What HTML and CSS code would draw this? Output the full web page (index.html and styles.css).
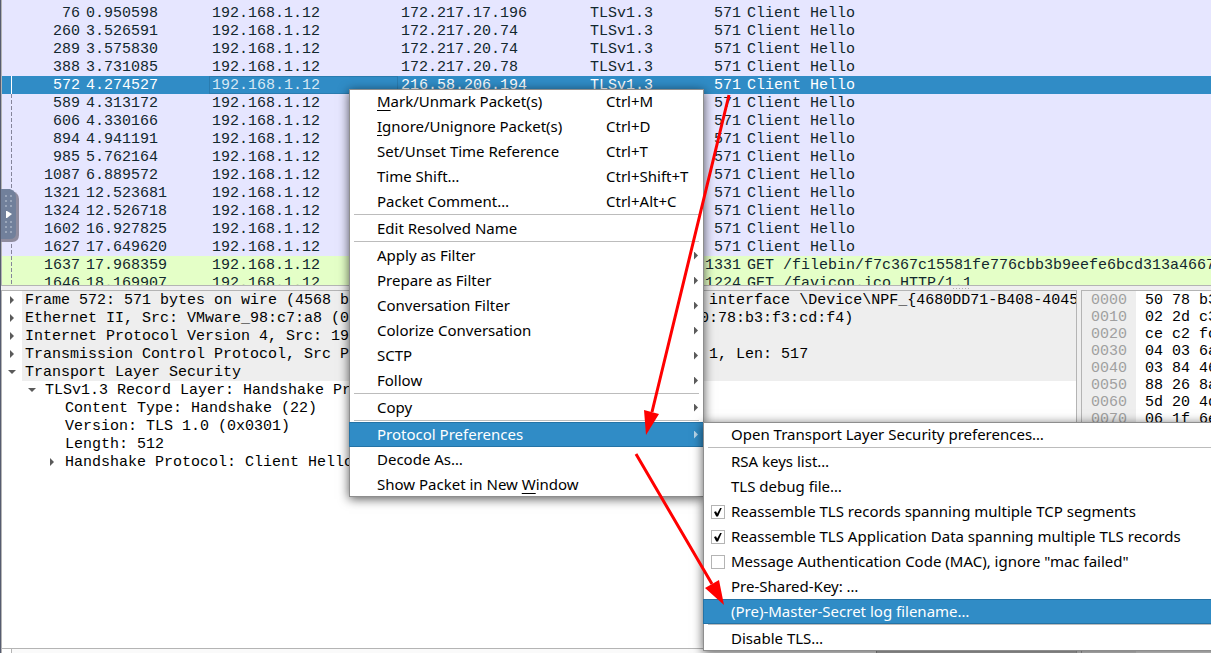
FILE: index.html
```
<!DOCTYPE html>
<html lang="en">
<head>
<meta charset="utf-8">
<title>Packet capture</title>
<link rel="stylesheet" href="styles.css">
</head>
<body>
<main class="window">
  <section class="packets" aria-label="Packet list">
    <table class="packet-table">
      <colgroup><col class="col-no"><col class="col-time"><col class="col-addr"><col class="col-addr"><col class="col-proto"><col class="col-len"><col></colgroup>
      <tbody>
        <tr><td class="num">76</td><td>0.950598</td><td>192.168.1.12</td><td>172.217.17.196</td><td>TLSv1.3</td><td class="num">571</td><td>Client Hello</td></tr>
        <tr><td class="num">260</td><td>3.526591</td><td>192.168.1.12</td><td>172.217.20.74</td><td>TLSv1.3</td><td class="num">571</td><td>Client Hello</td></tr>
        <tr><td class="num">289</td><td>3.575830</td><td>192.168.1.12</td><td>172.217.20.74</td><td>TLSv1.3</td><td class="num">571</td><td>Client Hello</td></tr>
        <tr><td class="num">388</td><td>3.731085</td><td>192.168.1.12</td><td>172.217.20.78</td><td>TLSv1.3</td><td class="num">571</td><td>Client Hello</td></tr>
        <tr class="selected"><td class="num">572</td><td>4.274527</td><td class="focused">192.168.1.12</td><td>216.58.206.194</td><td>TLSv1.3</td><td class="num">571</td><td>Client Hello</td></tr>
        <tr class="linked"><td class="num">589</td><td>4.313172</td><td>192.168.1.12</td><td></td><td></td><td class="num">571</td><td>Client Hello</td></tr>
        <tr class="linked"><td class="num">606</td><td>4.330166</td><td>192.168.1.12</td><td></td><td></td><td class="num">571</td><td>Client Hello</td></tr>
        <tr class="linked"><td class="num">894</td><td>4.941191</td><td>192.168.1.12</td><td></td><td></td><td class="num">571</td><td>Client Hello</td></tr>
        <tr class="linked"><td class="num">985</td><td>5.762164</td><td>192.168.1.12</td><td></td><td></td><td class="num">571</td><td>Client Hello</td></tr>
        <tr class="linked"><td class="num">1087</td><td>6.889572</td><td>192.168.1.12</td><td></td><td></td><td class="num">571</td><td>Client Hello</td></tr>
        <tr class="linked"><td class="num">1321</td><td>12.523681</td><td>192.168.1.12</td><td></td><td></td><td class="num">571</td><td>Client Hello</td></tr>
        <tr class="linked"><td class="num">1324</td><td>12.526718</td><td>192.168.1.12</td><td></td><td></td><td class="num">571</td><td>Client Hello</td></tr>
        <tr class="linked"><td class="num">1602</td><td>16.927825</td><td>192.168.1.12</td><td></td><td></td><td class="num">571</td><td>Client Hello</td></tr>
        <tr class="linked"><td class="num">1627</td><td>17.649620</td><td>192.168.1.12</td><td></td><td></td><td class="num">571</td><td>Client Hello</td></tr>
        <tr class="linked http"><td class="num">1637</td><td>17.968359</td><td>192.168.1.12</td><td></td><td></td><td class="num">1331</td><td>GET /filebin/f7c367c15581fe776cbb3b9eefe6bcd313a4667</td></tr>
        <tr class="linked http"><td class="num">1646</td><td>18.169907</td><td>192.168.1.12</td><td></td><td></td><td class="num">1224</td><td>GET /favicon.ico HTTP/1.1</td></tr>
      </tbody>
    </table>
  </section>

  <div class="splitter"><span class="grip"></span></div>

  <div class="lower">
    <section class="details" aria-label="Packet details">
      <ul class="tree">
        <li class="node shaded"><button class="toggle" aria-label="Expand"></button><span class="node-text">Frame 572: 571 bytes on wire (4568 bits), 571 bytes captured (4568 bits) on interface \Device\NPF_{4680DD71-B408-4045</span></li>
        <li class="node shaded"><button class="toggle" aria-label="Expand"></button><span class="node-text">Ethernet II, Src: VMware_98:c7:a8 (00:0c:29:98:c7:a8), Dst: zte_f3:cd:f4 (50:78:b3:f3:cd:f4)</span></li>
        <li class="node shaded"><button class="toggle" aria-label="Expand"></button><span class="node-text">Internet Protocol Version 4, Src: 192.168.1.12, Dst: 216.58.206.194</span></li>
        <li class="node shaded"><button class="toggle" aria-label="Expand"></button><span class="node-text">Transmission Control Protocol, Src Port: 54321, Dst Port: 443, Seq: 1, Ack: 1, Len: 517</span></li>
        <li class="node shaded"><button class="toggle open" aria-label="Collapse"></button><span class="node-text">Transport Layer Security</span></li>
        <li class="node level-1"><button class="toggle open" aria-label="Collapse"></button><span class="node-text">TLSv1.3 Record Layer: Handshake Protocol: Client Hello</span></li>
        <li class="node level-2"><span class="toggle-space"></span><span class="node-text">Content Type: Handshake (22)</span></li>
        <li class="node level-2"><span class="toggle-space"></span><span class="node-text">Version: TLS 1.0 (0x0301)</span></li>
        <li class="node level-2"><span class="toggle-space"></span><span class="node-text">Length: 512</span></li>
        <li class="node level-2"><button class="toggle" aria-label="Expand"></button><span class="node-text">Handshake Protocol: Client Hello</span></li>
      </ul>
      <div class="scrollbar"><span class="scroll-step"></span><span class="scroll-thumb"></span><span class="scroll-rest"></span></div>
    </section>
    <section class="bytes" aria-label="Packet bytes">
      <div class="offsets">0000<br>0010<br>0020<br>0030<br>0040<br>0050<br>0060<br>0070</div>
      <div class="hex">50 78 b3<br>02 2d c3<br>ce c2 fc<br>04 03 6a<br>03 84 46<br>88 26 8a<br>5d 20 4d<br>06 1f 6e</div>
    </section>
  </div>
</main>

<button class="side-handle" aria-label="Open side panel">
  <svg width="18" height="54" viewBox="0 0 18 54">
    <path d="M0 2H11Q18 4 18 10V46Q18 53 11 53H0Z" fill="#8f8c9e"/>
    <path d="M0 0H9Q15 2 15 8V44Q15 50 9 50H0Z" fill="#71809b"/>
    <path d="M5 6v14M10 6v14M5 32v14M10 32v14" stroke="#9aa6ba" stroke-width="2" stroke-dasharray="2 3"/>
    <path d="M5 22h1l5 3-5 4H5z" fill="#fff"/>
  </svg>
</button>

<div class="menu context-menu" role="menu">
  <button class="item" role="menuitem"><span class="label"><u>M</u>ark/Unmark Packet(s)</span><span class="keys">Ctrl+M</span></button>
  <button class="item" role="menuitem"><span class="label"><u>I</u>gnore/Unignore Packet(s)</span><span class="keys">Ctrl+D</span></button>
  <button class="item" role="menuitem"><span class="label">Set/Unset Time Reference</span><span class="keys">Ctrl+T</span></button>
  <button class="item" role="menuitem"><span class="label">Time Shift…</span><span class="keys">Ctrl+Shift+T</span></button>
  <button class="item" role="menuitem"><span class="label">Packet Comment…</span><span class="keys">Ctrl+Alt+C</span></button>
  <hr class="rule">
  <button class="item" role="menuitem"><span class="label">Edit Resolved Name</span></button>
  <hr class="rule">
  <button class="item parent" role="menuitem"><span class="label">Apply as Filter</span></button>
  <button class="item parent" role="menuitem"><span class="label">Prepare as Filter</span></button>
  <button class="item parent" role="menuitem"><span class="label">Conversation Filter</span></button>
  <button class="item parent" role="menuitem"><span class="label">Colorize Conversation</span></button>
  <button class="item parent" role="menuitem"><span class="label">SCTP</span></button>
  <button class="item parent" role="menuitem"><span class="label">Follow</span></button>
  <hr class="rule">
  <button class="item parent" role="menuitem"><span class="label">Copy</span></button>
  <hr class="rule">
  <div class="branch">
    <button class="item parent active" role="menuitem"><span class="label">Protocol Preferences</span></button>
    <div class="menu submenu" role="menu">
      <button class="item" role="menuitem"><span class="label">Open Transport Layer Security preferences…</span></button>
      <hr class="rule">
      <button class="item" role="menuitem"><span class="label">RSA keys list…</span></button>
      <button class="item" role="menuitem"><span class="label">TLS debug file…</span></button>
      <label class="item check"><input type="checkbox" checked>Reassemble TLS records spanning multiple TCP segments</label>
      <label class="item check"><input type="checkbox" checked>Reassemble TLS Application Data spanning multiple TLS records</label>
      <label class="item check"><input type="checkbox">Message Authentication Code (MAC), ignore "mac failed"</label>
      <button class="item" role="menuitem"><span class="label">Pre-Shared-Key: …</span></button>
      <button class="item active" role="menuitem"><span class="label">(Pre)-Master-Secret log filename…</span></button>
      <hr class="rule">
      <button class="item" role="menuitem"><span class="label">Disable TLS…</span></button>
    </div>
  </div>
  <button class="item" role="menuitem"><span class="label">Decode As…</span></button>
  <button class="item" role="menuitem"><span class="label">Show Packet in New <u>W</u>indow</span></button>
</div>

<svg class="arrows" width="740" height="620" viewBox="0 0 740 620" aria-hidden="true">
  <path d="M729 95L652 412M636 454L712 584" stroke="#f00" stroke-width="3" fill="none"/>
  <path d="M644 410L659 414L646 435ZM705 588L719 580L724 605Z" fill="#f00"/>
</svg>
</body>
</html>
```
FILE: styles.css
```
* { box-sizing: border-box; }

body {
  margin: 0;
  height: 100vh;
  overflow: hidden;
  position: relative;
  background: #efefef;
  color: #000;
  font: 15px/18px "Liberation Mono", monospace;
}

button {
  margin: 0;
  padding: 0;
  border: 0;
  background: none;
  color: inherit;
  font: inherit;
  text-align: left;
}

.window {
  display: grid;
  grid-template-rows: 286px 4px minmax(0, 1fr);
  height: 100%;
  border-left: 1px solid #565c70;
}

/* packet list */
.packets {
  overflow: hidden;
  padding-top: 4px;
  background: #e6e6ff;
  border-left: 1px solid #b4b4b4;
  border-bottom: 1px solid #b4b4b4;
  color: #12272e;
}

.packet-table {
  width: 100%;
  table-layout: fixed;
  border-collapse: collapse;
}

.col-no { width: 81px; }
.col-time { width: 126px; }
.col-addr { width: 189px; }
.col-proto { width: 114px; }
.col-len { width: 43px; }

.packet-table td {
  height: 18px;
  padding: 2px 0 0 3px;
  line-height: 16px;
  overflow: hidden;
  white-space: nowrap;
}

.packet-table .num { padding: 2px 3px 0 0; text-align: right; }

.http { background: #e4ffc7; }
.selected { background: #308cc6; color: #fff; }
.selected .focused { box-shadow: inset 0 0 0 1px #2a7cb0; color: #d6e8f4; }

.selected td:first-child {
  background: linear-gradient(#fff, #fff) 9px 0 / 1px 100% no-repeat;
}

.linked td:first-child {
  background: repeating-linear-gradient(#85859a 0 4px, transparent 4px 6px) 9px 0 / 1px 100% no-repeat;
}

.splitter { display: flex; align-items: center; padding-left: 952px; }

.grip {
  width: 17px;
  height: 1px;
  background: repeating-linear-gradient(90deg, #b0b0b0 0 1px, transparent 1px 3px);
}

/* lower panes */
.lower {
  display: grid;
  grid-template-columns: 1fr 130px;
  gap: 4px;
  min-height: 0;
}

.details {
  display: flex;
  flex-direction: column;
  min-width: 0;
  min-height: 0;
  background: #fff;
  border: 1px solid #b4b4b4;
  border-bottom: 0;
}

.tree {
  flex: 1;
  margin: 0;
  padding: 0;
  overflow: hidden;
  list-style: none;
  white-space: nowrap;
}

.node { display: flex; height: 18px; }
.level-1 { padding-left: 20px; }
.level-2 { padding-left: 40px; }
.node-text { flex: 1; padding: 2px 0 0 3px; line-height: 16px; }
.shaded .node-text { background: #eeeeee; }

.toggle,
.toggle-space { flex: none; width: 20px; }

.toggle::before {
  content: "";
  display: block;
  width: 4px;
  height: 8px;
  margin-left: 8px;
  background: #5a5a5a;
  clip-path: polygon(0 0, 100% 50%, 0 100%);
}

.toggle.open::before {
  width: 8px;
  height: 4px;
  margin-left: 6px;
  clip-path: polygon(0 0, 100% 0, 50% 100%);
}

.scrollbar {
  display: flex;
  height: 5px;
  background: #c8c8c8;
  border-top: 1px solid #b4b4b4;
}

.scroll-step { width: 10px; background: #fff; border-right: 1px solid #b4b4b4; }
.scroll-thumb { flex: 866; background: #fafafa; border-right: 1px solid #999; }
.scroll-rest { flex: 200; }

.bytes {
  display: flex;
  overflow: hidden;
  background: #fff;
  border: 1px solid #b4b4b4;
  border-width: 1px 0 0 1px;
  line-height: 17px;
  white-space: nowrap;
}

.offsets { padding: 1px 9px 0; background: #eeeeee; color: #a0a0a0; }
.hex { padding: 1px 0 0 9px; }

.side-handle { position: absolute; left: 1px; top: 189px; }
.side-handle svg { display: block; }

/* menus */
.menu {
  position: absolute;
  background: #fff;
  box-shadow: 0 2px 10px rgba(0, 0, 0, 0.65);
  color: #000;
  font: 15px/25px "Noto Sans", sans-serif;
}

.menu::before {
  content: "";
  position: absolute;
  inset: 0;
  border: 1px solid #8e8e8e;
  pointer-events: none;
}

.context-menu { left: 349px; top: 89px; width: 355px; }
.submenu { left: calc(100% - 1px); top: 0; width: 540px; }
.branch { position: relative; }

.item {
  display: flex;
  align-items: center;
  width: 100%;
  height: 25px;
  padding-left: 28px;
  white-space: nowrap;
}

.label { flex: 1; }
.keys { width: 98px; }
.label u { text-underline-offset: 3px; text-decoration-thickness: 1px; }

.active {
  position: relative;
  background: #308cc6;
  box-shadow: inset 0 1px #2473a6, inset 0 -1px #2473a6, inset 1px 0 #2473a6;
  color: #fff;
}

.parent::after {
  content: "";
  width: 4px;
  height: 8px;
  margin-right: 6px;
  background: #5a5a5a;
  clip-path: polygon(0 0, 100% 50%, 0 100%);
}

.parent.active::after { background: #b8d6ea; }

.rule {
  height: 2px;
  margin: 0 5px;
  border: 0;
  border-top: 1px solid #bcbcbc;
}

.check { gap: 6px; padding-left: 8px; }

.check input {
  appearance: none;
  width: 14px;
  height: 14px;
  margin: 0;
  background: #fff;
  border: 1px solid #b4b4b4;
}

.check input:checked::before {
  content: "";
  display: block;
  width: 8px;
  height: 9px;
  margin: 2px;
  background: #000;
  clip-path: polygon(0 50%, 25% 42%, 40% 68%, 80% 0, 100% 0, 50% 100%, 28% 100%);
}

.arrows { position: absolute; left: 0; top: 0; pointer-events: none; }
```
